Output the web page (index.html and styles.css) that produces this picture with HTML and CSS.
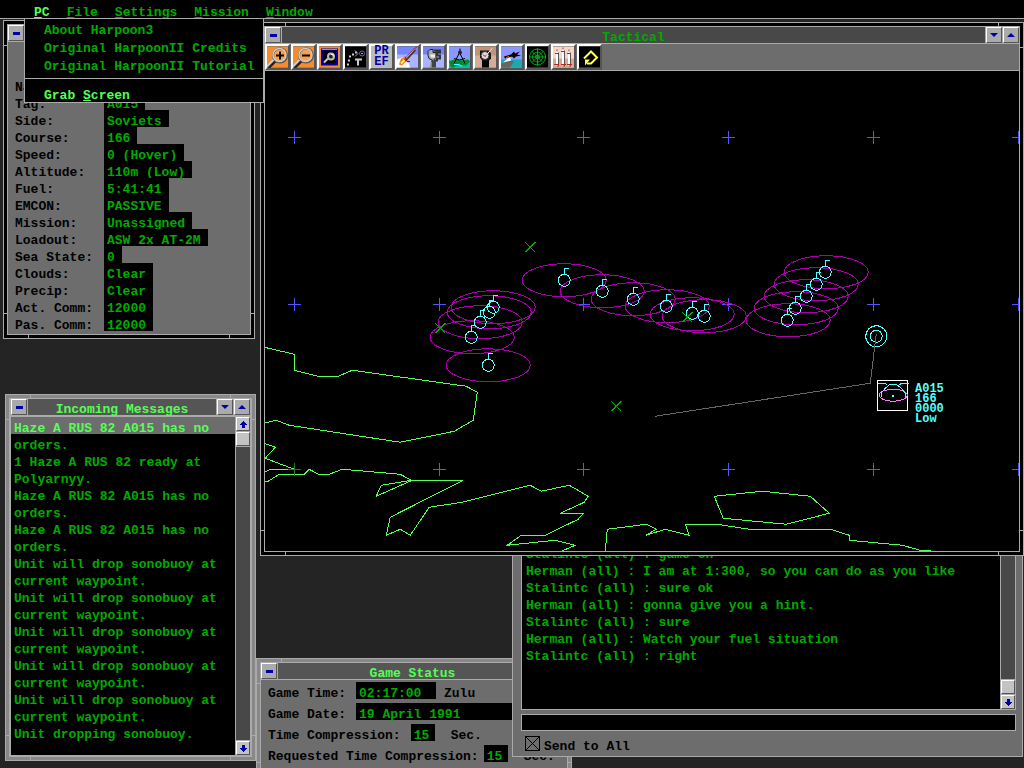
FILE: index.html
```
<!DOCTYPE html>
<html lang="en">
<head>
    <meta charset="UTF-8">
    <meta name="viewport" content="width=device-width, initial-scale=1">
    <title>Harpoon3</title>
    <link rel="stylesheet" href="styles.css">
</head>
<body>
    <nav class="menubar">
        <button class="menu open"><u>P</u>C</button>
        <button class="menu"><u>F</u>ile</button>
        <button class="menu"><u>S</u>ettings</button>
        <button class="menu"><u>M</u>ission</button>
        <button class="menu"><u>W</u>indow</button>
        <div class="dropdown">
            <button>About Harpoon3</button>
            <button>Original HarpoonII Credits</button>
            <button>Original HarpoonII Tutorial</button>
            <hr>
            <button class="bright">Grab <u>S</u>creen</button>
        </div>
    </nav>

    <main class="desktop">
        <!-- Unit info -->
        <section class="window active unit">
            <div class="pane">
                <header class="titlebar">
                    <button class="tbtn" aria-label="Close"><i class="dash"></i></button>
                    <h2></h2>
                </header>
                <dl class="facts">
                    <dt>Name:</dt><dd>Haze A</dd>
                    <dt>Tag:</dt><dd>A015</dd>
                    <dt>Side:</dt><dd>Soviets</dd>
                    <dt>Course:</dt><dd>166</dd>
                    <dt>Speed:</dt><dd>0 (Hover)</dd>
                    <dt>Altitude:</dt><dd>110m (Low)</dd>
                    <dt>Fuel:</dt><dd>5:41:41</dd>
                    <dt>EMCON:</dt><dd>PASSIVE</dd>
                    <dt>Mission:</dt><dd>Unassigned</dd>
                    <dt>Loadout:</dt><dd>ASW 2x AT-2M</dd>
                    <dt>Sea State:</dt><dd>0</dd>
                    <dt>Clouds:</dt><dd>Clear</dd>
                    <dt>Precip:</dt><dd>Clear</dd>
                    <dt>Act. Comm:</dt><dd>12000</dd>
                    <dt>Pas. Comm:</dt><dd>12000</dd>
                </dl>
            </div>
        </section>

        <!-- Messages -->
        <section class="window messages">
            <div class="pane">
                <header class="titlebar">
                    <button class="tbtn" aria-label="Close"><i class="dash"></i></button>
                    <h2>Incoming Messages</h2>
                    <button class="tbtn" aria-label="Minimize"><i class="down"></i></button>
                    <button class="tbtn" aria-label="Maximize"><i class="up"></i></button>
                </header>
                <div class="scroller">
                    <ul class="lines">
                        <li class="selected">Haze A RUS 82 A015 has no</li>
                        <li>orders.</li>
                        <li>1 Haze A RUS 82 ready at</li>
                        <li>Polyarnyy.</li>
                        <li>Haze A RUS 82 A015 has no</li>
                        <li>orders.</li>
                        <li>Haze A RUS 82 A015 has no</li>
                        <li>orders.</li>
                        <li>Unit will drop sonobuoy at</li>
                        <li>current waypoint.</li>
                        <li>Unit will drop sonobuoy at</li>
                        <li>current waypoint.</li>
                        <li>Unit will drop sonobuoy at</li>
                        <li>current waypoint.</li>
                        <li>Unit will drop sonobuoy at</li>
                        <li>current waypoint.</li>
                        <li>Unit will drop sonobuoy at</li>
                        <li>current waypoint.</li>
                        <li>Unit dropping sonobuoy.</li>
                    </ul>
                    <div class="scrollbar">
                        <button aria-label="Scroll up"><svg viewBox="0 0 7 7"><path d="M3 0h1v1h1v1h1v1h1v1H5v3H2V4H0V3h1V2h1V1h1z"/></svg></button>
                        <button aria-label="Thumb"></button>
                        <span class="track"></span>
                        <button aria-label="Scroll down"><svg viewBox="0 0 7 7"><path d="M2 0h3v3h2v1H6v1H5v1H4v1H3V6H2V5H1V4H0V3h2z"/></svg></button>
                    </div>
                </div>
            </div>
        </section>

        <!-- Game status -->
        <section class="window status">
            <div class="pane">
                <header class="titlebar">
                    <button class="tbtn" aria-label="Close"><i class="dash"></i></button>
                    <h2>Game Status</h2>
                </header>
                <div class="status-body">
                    <p><span class="gap">Game Time:</span><output class="clock">02:17:00</output><span class="zulu">Zulu</span></p>
                    <p><span class="gap">Game Date:</span><output class="date">19 April 1991</output></p>
                    <p><span class="gap">Time Compression:</span><output>15</output><span class="sec">Sec.</span></p>
                    <p><span class="gap-small">Requested Time Compression:</span><output>15</output><span class="sec">Sec.</span></p>
                </div>
            </div>
        </section>

        <!-- Chat -->
        <section class="chat">
            <div class="scroller boxed">
                <ul class="lines">
                    <li>Stalintc (all) : game on</li>
                    <li>Herman (all) : I am at 1:300, so you can do as you like</li>
                    <li>Stalintc (all) : sure ok</li>
                    <li>Herman (all) : gonna give you a hint.</li>
                    <li>Stalintc (all) : sure</li>
                    <li>Herman (all) : Watch your fuel situation</li>
                    <li>Stalintc (all) : right</li>
                </ul>
                <div class="scrollbar">
                    <span class="track"></span>
                    <button aria-label="Thumb"></button>
                    <button aria-label="Scroll down"><svg viewBox="0 0 7 7"><path d="M2 0h3v3h2v1H6v1H5v1H4v1H3V6H2V5H1V4H0V3h2z"/></svg></button>
                </div>
            </div>
            <input class="entry" type="text" aria-label="Message">
            <label class="send"><input type="checkbox" checked>Send to All</label>
        </section>

        <!-- Tactical map -->
        <section class="window active tactical">
            <div class="pane">
                <header class="titlebar">
                    <button class="tbtn" aria-label="Close"><i class="dash"></i></button>
                    <h2>Tactical</h2>
                    <button class="tbtn" aria-label="Minimize"><i class="down"></i></button>
                    <button class="tbtn" aria-label="Maximize"><i class="up"></i></button>
                </header>
                <div class="toolbar">
                    <button aria-label="Zoom in"><svg viewBox="0 0 21 21">
                        <rect width="21" height="21" fill="#f98b2c"/>
                        <path d="M1 21L10 12" stroke="#222" stroke-width="4"/><path d="M0 20L9 11" stroke="#ccc" stroke-width="2"/>
                        <circle cx="13" cy="9" r="7" fill="#f9a050" stroke="#555" stroke-width="2"/><circle cx="12.500" cy="8.500" r="6.500" fill="none" stroke="#ccc" stroke-width="1.500"/>
                        <path d="M9 9h8M13 5v8" stroke="#000" stroke-width="2"/></svg></button>
                    <button aria-label="Zoom out"><svg viewBox="0 0 21 21">
                        <rect width="21" height="21" fill="#f98b2c"/>
                        <path d="M1 21L10 12" stroke="#222" stroke-width="4"/><path d="M0 20L9 11" stroke="#ccc" stroke-width="2"/>
                        <circle cx="13" cy="9" r="7" fill="#f9a050" stroke="#555" stroke-width="2"/><circle cx="12.500" cy="8.500" r="6.500" fill="none" stroke="#ccc" stroke-width="1.500"/>
                        <path d="M9 9h8" stroke="#000" stroke-width="2"/></svg></button>
                    <button aria-label="Zoom to window"><svg viewBox="0 0 21 21">
                        <rect width="21" height="21" fill="#f98b2c"/>
                        <rect x="3" y="3" width="15" height="15" fill="#000" stroke="#0000aa" stroke-width="2"/><path d="M3 3h15" stroke="#88f"/>
                        <path d="M5 16l4-4" stroke="#ccc" stroke-width="2"/><circle cx="12" cy="10" r="3" fill="#222" stroke="#bbb" stroke-width="2"/><path d="M12 8h2v2" stroke="#fff" fill="none"/></svg></button>
                    <button aria-label="Tracks"><svg viewBox="0 0 21 21">
                        <rect width="21" height="21" fill="#000"/>
                        <path d="M3 19v-2M4 15v-2M5 11V9M7 8h2M10 6h2" stroke="#ccc" stroke-width="2"/><path d="M10 4l3 3-3 3" fill="none" stroke="#999"/>
                        <circle cx="17" cy="7" r="2.500" fill="none" stroke="#66b"/><path d="M16 7h2" stroke="#aaf"/>
                        <path d="M10 13h7M13 12v7" stroke="#ccc" stroke-width="2"/></svg></button>
                    <button class="pref">PR<br>EF</button>
                    <button aria-label="Launch missile"><svg viewBox="0 0 21 21">
                        <rect width="21" height="21" fill="#7784ff"/><path d="M0 8h21v13H0z" fill="#aab4ff"/>
                        <path d="M0 13l5-2 7 6 1 4H0z" fill="#fff"/><path d="M2 18l2-6 5-1 1 3-5 5z" fill="#ff7020"/><path d="M4 17l4-4" stroke="#ff5" stroke-width="2"/>
                        <path d="M8 14L18 3" stroke="#533" stroke-width="3"/><path d="M8 13L18 2" stroke="#bbb"/><path d="M17 3l3-3M8 10l2 5h3" stroke="#b00" fill="none"/></svg></button>
                    <button aria-label="Sensors"><svg viewBox="0 0 21 21">
                        <rect width="21" height="21" fill="#7080ff"/><path d="M0 8h21v13H0z" fill="#aab4ff"/>
                        <path d="M5 5l2-2h3v3h3v5l-3 3-4-2-1-3z" fill="#aaa" stroke="#222"/><path d="M11 4h6v2h-3v3h3v3h-3v2h-3" fill="none" stroke="#333" stroke-width="2"/><path d="M7 8h5v3H8z" fill="#eee"/>
                        <path d="M8 14h5v7H7z" fill="#444"/><path d="M8 15v6" stroke="#ccc"/></svg></button>
                    <button aria-label="Navigation"><svg viewBox="0 0 21 21">
                        <rect width="21" height="21" fill="#8b98ff"/><path d="M0 14h21v7H0z" fill="#00b8b8"/>
                        <path d="M0 15l5-2 7 1 7-1 2 2-4 4-8-1-4 3H2z" fill="#008a28"/><path d="M5 18h5l3 2" stroke="#40ffff" fill="none"/>
                        <path d="M11 2v4M10 7L5 17M11 7l5 10M5 12q6 3 11 0" fill="none" stroke="#000"/><circle cx="11" cy="6" r="2" fill="#222"/></svg></button>
                    <button aria-label="Time"><svg viewBox="0 0 21 21">
                        <rect width="21" height="21" fill="#c09478"/><path d="M0 9h21v12H0z" fill="#d5ad96"/>
                        <path d="M7 13h7v8H7z" fill="#000"/><path d="M5 4h9l2 3v5l-3 3H8l-3-4z" fill="#111"/>
                        <circle cx="10" cy="9" r="4" fill="#ddd" stroke="#333"/><path d="M8 8l2 2 6-7" stroke="#a00" fill="none"/><path d="M11 9l6-7" stroke="#fff"/></svg></button>
                    <button aria-label="Air operations"><svg viewBox="0 0 21 21">
                        <rect width="21" height="21" fill="#8b98ff"/><path d="M0 13h21v8H0z" fill="#18aab0"/>
                        <path d="M0 17l7-3 6 1-4 6H0z" fill="#666"/><path d="M2 16l7-6 1 4z" fill="#fff"/>
                        <path d="M3 10l7-2 3-3 1 2 5-2-3 3 4 1-5 1-2 2-2-2-7 2z" fill="#000"/><path d="M5 11l3-1" stroke="#f60"/></svg></button>
                    <button aria-label="Radar"><svg viewBox="0 0 21 21">
                        <rect width="21" height="21" fill="#000"/>
                        <g fill="none" stroke="#00aa22"><circle cx="10.500" cy="10.500" r="8"/><circle cx="10.500" cy="10.500" r="5"/><circle cx="10.500" cy="10.500" r="2"/><path d="M2 10.500h17M10.500 2v17M5 5l11 11M16 5L5 16"/></g></svg></button>
                    <button aria-label="Weapons"><svg viewBox="0 0 21 21">
                        <rect width="21" height="21" fill="#f5d5c5"/><path d="M0 12h21v9H0z" fill="#d8a890"/>
                        <path d="M5 6v14M11 4v16M17 6v14" stroke="#555" stroke-width="2"/><path d="M4 4v15M10 2v17M16 4v15" stroke="#fff" stroke-width="2"/>
                        <path d="M4 3v2M10 1v2M16 3v2M2 7h4M8 5h4M14 7h4M1 18h5M8 18h5M14 18h5" stroke="#b22"/></svg></button>
                    <button aria-label="Rotate"><svg viewBox="0 0 21 21">
                        <rect width="21" height="21" fill="#000"/>
                        <path d="M5 12L12 5l6 6-6 6H8" fill="none" stroke="#ffff55" stroke-width="2"/><path d="M6 13h5l-5 6z" fill="#ffff55"/></svg></button>
                </div>
                <svg class="map" viewBox="265 71 754 480" preserveAspectRatio="xMinYMin slice" shape-rendering="crispEdges">
                    <defs>
                        <path id="grid" d="M-6 0H7M0-6V7"/>
                        <path id="mark" d="M-5-5L5 5M-5 5L5-5"/>
                        <ellipse id="range" rx="42" ry="16.500"/>
                        <g id="buoy"><circle r="6"/><path d="M0-6V-12H5"/></g>
                    </defs>
                    <g class="art" transform="translate(.25 .25)">
                        <g stroke="#5555ff">
                            <use href="#grid" x="294" y="137"/><use href="#grid" x="439" y="137"/><use href="#grid" x="583" y="137"/><use href="#grid" x="728" y="137"/><use href="#grid" x="873" y="137"/><use href="#grid" x="1018" y="137"/>
                            <use href="#grid" x="294" y="304"/><use href="#grid" x="439" y="304"/><use href="#grid" x="583" y="304"/><use href="#grid" x="728" y="304"/><use href="#grid" x="873" y="304"/><use href="#grid" x="1018" y="304"/>
                            <use href="#grid" x="439" y="469"/><use href="#grid" x="583" y="469"/><use href="#grid" x="728" y="469"/><use href="#grid" x="873" y="469"/><use href="#grid" x="1018" y="469"/>
                        </g>
                        <!-- coastline -->
                        <g stroke="#55ff55">
                            <path d="M264 347L294 354V370L318 376H338L352 370L466 386L477 392L473 420L454 431L400 442L289 425L276 420L264 423"/>
                            <path d="M264 443L275 447L265 458L294 469H270L264 472"/>
                            <path d="M264 481H268L279 474H304L309 469L318 474H329L342 469L400 474L411 480L381 485L376 496L412 480H463L390 517L386 535L400 529L410 535L429 507L462 502L530 485L541 491L569 485L588 496L584 502L560 513H583L578 519L545 535H521L507 545L555 540L575 545L561 551"/>
                            <path d="M605 551L607 529L646 524L656 529L646 535L665 529L689 535L685 524H717L749 529H830L849 535V540L902 545L920 550H931"/>
                            <path d="M714 496L762 491L810 496L829 513L786 524L723 518Z"/>
                        </g>
                        <use href="#grid" x="294" y="469" stroke="#227722"/>
                        <g stroke="#aa00aa">
                            <use href="#range" x="493" y="307"/><use href="#range" x="489" y="312"/><use href="#range" x="480" y="322"/><use href="#range" x="472" y="337"/><use href="#range" x="488" y="365"/>
                            <use href="#range" x="564" y="280"/><use href="#range" x="602" y="291"/><use href="#range" x="633" y="299"/><use href="#range" x="667" y="306"/><use href="#range" x="692" y="314"/><use href="#range" x="704" y="316"/>
                            <use href="#range" x="826" y="272"/><use href="#range" x="816" y="284"/><use href="#range" x="806" y="296"/><use href="#range" x="796" y="308"/><use href="#range" x="788" y="320"/>
                        </g>
                        <g stroke="#55ffff">
                            <use href="#buoy" x="493" y="307"/><use href="#buoy" x="489" y="312"/><use href="#buoy" x="480" y="322"/><use href="#buoy" x="471" y="337"/><use href="#buoy" x="488" y="365"/>
                            <use href="#buoy" x="564" y="280"/><use href="#buoy" x="602" y="291"/><use href="#buoy" x="633" y="299"/><use href="#buoy" x="666" y="306"/><use href="#buoy" x="692" y="313"/><use href="#buoy" x="704" y="316"/>
                            <use href="#buoy" x="825" y="272"/><use href="#buoy" x="816" y="284"/><use href="#buoy" x="806" y="296"/><use href="#buoy" x="795" y="308"/><use href="#buoy" x="787" y="320"/>
                            <circle cx="876" cy="336" r="10.500"/><circle cx="876" cy="336" r="6"/>
                        </g>
                        <g stroke="#00aa00">
                            <use href="#mark" x="530" y="247"/><use href="#mark" x="616" y="406"/><use href="#mark" x="440" y="328"/><use href="#mark" x="687" y="317"/>
                        </g>
                        <path d="M655 416L870 383L876 334" stroke="#666"/>
                        <!-- own helicopter -->
                        <rect x="877" y="380" width="30" height="30" stroke="#fff"/>
                        <ellipse cx="893" cy="395" rx="14" ry="6" stroke="#ff77ff"/>
                        <path d="M878 383H885L887 385M909 383H901L899 385M881 397V393L885 388L890 384H896L901 388L905 393V397" stroke="#55ffff"/>
                        <rect x="892" y="395" width="1" height="1" stroke="#55ffff"/>
                    </g>
                    <g class="tag">
                        <text x="915" y="392">A015</text>
                        <text x="915" y="402">166</text>
                        <text x="915" y="412">0000</text>
                        <text x="915" y="422">Low</text>
                    </g>
                </svg>
            </div>
        </section>
    </main>
</body>
</html>
```
FILE: styles.css
```
* {
    box-sizing: border-box;
}

body {
    margin: 0;
    height: 100vh;
    display: flex;
    flex-direction: column;
    overflow: hidden;
    background-color: #242424;
    color: #000;
    font: bold 13px "Liberation Mono", "Courier New", monospace;
}

button {
    margin: 0;
    padding: 0;
    border: 0;
    background: none;
    color: inherit;
    font: inherit;
    text-align: left;
}

ul, dl, dd, p, h2 {
    margin: 0;
    padding: 0;
    font: inherit;
}

/* Menu */
.menubar {
    position: relative;
    z-index: 10;
    display: flex;
    gap: 17px;
    height: 19px;
    padding-left: 34px;
    background-color: #000;
    border-bottom: 1px solid #aaa;
    color: #00aa00;
}

.menu {
    line-height: 26px;
    height: 18px;
}

.menu.open, .bright {
    color: #55ff55;
}

.dropdown {
    position: absolute;
    left: 24px;
    top: 18px;
    width: 240px;
    padding-top: 3px;
    display: flex;
    flex-direction: column;
    background-color: #000;
    border: 1px solid #aaa;
}

.dropdown button {
    height: 18px;
    line-height: 18px;
    padding-left: 19px;
    white-space: nowrap;
}

.dropdown hr {
    width: 100%;
    margin: 2px 0 8px;
    border: 0;
    border-top: 1px solid #aaa;
}

.dropdown .bright {
    height: 15px;
}

/* Windows */
.desktop {
    position: relative;
    flex: 1;
}

.window {
    --frame: #888;
    position: absolute;
    display: flex;
    padding: 3px;
    border: 1px solid #aaa;
    background:
        linear-gradient(#aaa, #aaa) left 24px top 0 / 1px 100% no-repeat,
        linear-gradient(#aaa, #aaa) right 24px top 0 / 1px 100% no-repeat,
        linear-gradient(#aaa, #aaa) left 0 top 24px / 100% 1px no-repeat,
        linear-gradient(#aaa, #aaa) left 0 bottom 24px / 100% 1px no-repeat,
        var(--frame);
}

.window.active {
    --frame: #000;
}

.pane {
    flex: 1;
    min-width: 0;
    display: flex;
    flex-direction: column;
    border: 1px solid #aaa;
    background-color: #6d6d6d;
}

.titlebar {
    display: flex;
    flex: none;
    gap: 1px;
    height: 17px;
    border-bottom: 1px solid #aaa;
    background-color: #aaa;
}

.titlebar h2 {
    flex: 1;
    background-color: #555;
    color: #55ff55;
    line-height: 22px;
    text-align: center;
}

.tbtn {
    flex: none;
    display: flex;
    align-items: center;
    justify-content: center;
    width: 16px;
    height: 16px;
    border: 1px solid;
    border-color: #fff #555 #555 #fff;
    background-color: #aaa;
}

.dash {
    width: 7px;
    height: 3px;
    background-color: #0000aa;
}

.up, .down {
    border: 4px solid transparent;
    border-top-width: 0;
    border-bottom-color: #0000aa;
}

.down {
    border-width: 4px 4px 0;
    border-top-color: #0000aa;
}

.unit {
    left: 3px;
    top: 1px;
    width: 252px;
}

.facts {
    display: grid;
    grid-template-columns: 89px 1fr;
    padding: 34px 8px 3px 7px;
}

.facts dt, .facts dd, .lines li {
    height: 17px;
    line-height: 24px;
    white-space: nowrap;
}

.facts dd {
    justify-self: start;
    padding: 0 7px 0 3px;
    background-color: #000;
    color: #00aa00;
}

.scroller {
    flex: 1;
    min-height: 0;
    display: flex;
    background-color: #000;
    color: #00aa00;
}

.lines {
    flex: 1;
    min-width: 0;
    overflow: hidden;
    list-style: none;
}

.lines li {
    padding-left: 3px;
}

.lines .selected {
    background-color: #6d6d6d;
    color: #55ff55;
}

.scrollbar {
    display: flex;
    flex-direction: column;
    gap: 1px;
    width: 15px;
    border-left: 1px solid #aaa;
    background-color: #aaa;
}

.scrollbar button {
    display: flex;
    align-items: center;
    justify-content: center;
    height: 14px;
    border: 1px solid;
    border-color: #fff #555 #555 #fff;
    background-color: #c3c3c3;
}

.scrollbar svg {
    width: 7px;
    height: 7px;
    fill: #0000aa;
}

.track {
    flex: 1;
    background-color: #484848;
}

.messages {
    left: 5px;
    top: 375px;
    bottom: 7px;
    width: 251px;
}

.messages .pane {
    border-width: 1px 2px 2px;
}

.messages .titlebar {
    height: 18px;
    border-bottom-width: 2px;
}

.status {
    left: 256px;
    top: 639px;
    bottom: -20px;
    width: 316px;
}

.status .titlebar h2 {
    padding-right: 20px;
}

.status-body {
    display: flex;
    flex-direction: column;
    gap: 4px;
    padding: 2px 7px;
}

.status-body p {
    display: flex;
    height: 17px;
    line-height: 24px;
    white-space: nowrap;
}

.status-body output {
    min-width: 24px;
    padding-left: 3px;
    background-color: #000;
    color: #00aa00;
}

.gap {
    margin-right: 10px;
}

.gap-small {
    margin-right: 5px;
}

.status-body .clock {
    width: 80px;
}

.status-body .date {
    flex: 1;
}

.zulu {
    margin-left: 8px;
}

.sec {
    margin-left: 16px;
}

.chat {
    position: absolute;
    left: 512px;
    right: 1px;
    top: 515px;
    bottom: 11px;
    display: flex;
    flex-direction: column;
    gap: 4px;
    padding: 7px 6px 4px 8px;
    border: 1px solid #aaa;
    background-color: #6d6d6d;
}

.boxed {
    border: 1px solid #aaa;
}

.boxed .lines li {
    padding-left: 4px;
}

.entry {
    height: 17px;
    padding: 0 3px;
    border: 1px solid #aaa;
    border-radius: 0;
    outline: 0;
    background-color: #000;
    color: #00aa00;
    font: inherit;
}

.send {
    display: flex;
    gap: 4px;
    height: 16px;
    margin: 1px 0 0 4px;
    line-height: 21px;
}

.send input {
    appearance: none;
    width: 15px;
    height: 15px;
    margin: 0;
    border: 1px solid #000;
    background:
        linear-gradient(45deg, transparent 48%, #000 48%, #000 52%, transparent 52%),
        linear-gradient(-45deg, transparent 48%, #000 48%, #000 52%, transparent 52%);
}

/* Tactical */
.tactical {
    left: 260px;
    right: 0;
    top: 3px;
    bottom: 212px;
}

.tactical .titlebar h2 {
    background-color: #484848;
    color: #00aa00;
}

.toolbar {
    display: flex;
    flex: none;
    gap: 1px;
    height: 27px;
    border-bottom: 1px solid #aaa;
}

.toolbar button {
    width: 25px;
    height: 26px;
    border: 2px solid;
    border-color: #fff #555 #555 #fff;
}

.toolbar svg {
    display: block;
    width: 21px;
    height: 22px;
}

.toolbar .pref {
    background-color: #bbb;
    color: #0000aa;
    font-size: 12px;
    line-height: 11px;
    text-align: center;
}

.map {
    flex: 1;
    min-height: 0;
    width: 100%;
    background-color: #000;
}

.art {
    fill: none;
    stroke-width: 1px;
}

.tag {
    fill: #55ffff;
    font-size: 12px;
}
```
